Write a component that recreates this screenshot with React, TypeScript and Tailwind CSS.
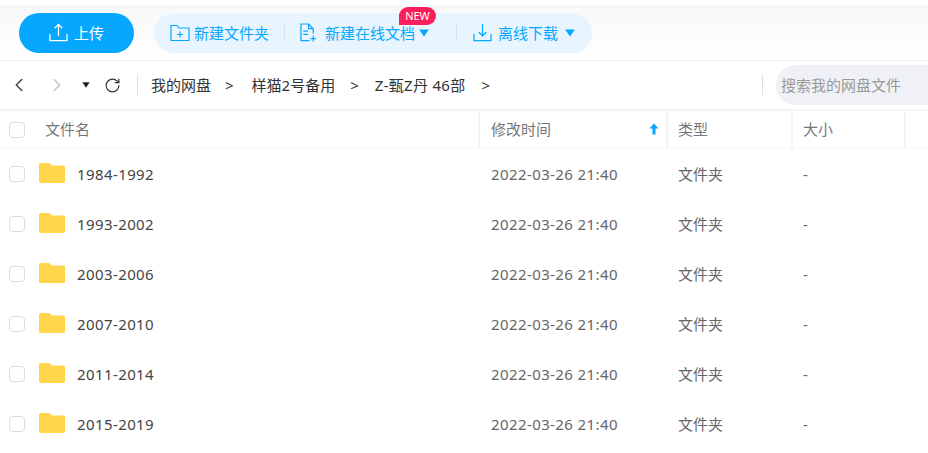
import { ChevronLeft, ChevronRight, RotateCw } from "lucide-react";

const FOLDERS = ["1984-1992", "1993-2002", "2003-2006", "2007-2010", "2011-2014", "2015-2019"];

const FONT = "font-['Noto_Sans','Noto_Sans_CJK_SC',sans-serif]";

function Caret({ className }: { className: string }) {
  return (
    <svg viewBox="0 0 12 9" className={className} fill="currentColor">
      <path d="M0.5 0.5h11L6 8.5z" />
    </svg>
  );
}

function UploadIcon() {
  return (
    <svg viewBox="0 0 20 20" className="w-[19px] h-[19px]" fill="none" stroke="white" strokeWidth="1.3">
      <path d="M1 11.500v7h18v-7M10 14V1.500M6 5.500l4-4 4 4" />
    </svg>
  );
}

function NewFolderIcon() {
  return (
    <svg viewBox="0 0 20 18" className="w-[20px] h-[18px]" fill="none" stroke="#06a7ff" strokeWidth="1.2">
      <path d="M1 16.500v-15h6l2 2.500h10v12.500zM10 7.500v6M7 10.500h6" />
    </svg>
  );
}

function NewDocIcon() {
  return (
    <svg viewBox="0 0 18 20" className="w-[17px] h-[19px]" fill="none" stroke="#06a7ff" strokeWidth="1.3">
      <path d="M10 18.500H1V1h8l5 5v5M9 1v5h5M3.500 8.500h5M3.500 12h5M14 13.500v6M11 16.500h6" />
    </svg>
  );
}

function DownloadIcon() {
  return (
    <svg viewBox="0 0 20 20" className="w-[19px] h-[19px]" fill="none" stroke="#06a7ff" strokeWidth="1.3">
      <path d="M1 11.500v7h18v-7M10 1v12.500M6 9.500l4 4 4-4" />
    </svg>
  );
}

function FolderIcon() {
  return (
    <svg viewBox="0 0 26 20" className="w-[26px] h-[20px]">
      <path d="M1.500 0h8.500l3 2.500h11.500a1.500 1.500 0 0 1 1.500 1.500v14.500a1.500 1.500 0 0 1-1.500 1.500h-23a1.500 1.500 0 0 1-1.500-1.500v-17a1.500 1.500 0 0 1 1.500-1.500z" fill="#ffd54a" />
    </svg>
  );
}

function Checkbox() {
  return <div className="w-4 h-4 rounded-[4px] border border-[#dcdcdc] bg-white shrink-0" />;
}

function HeadCell({ label, className }: { label: string; className: string }) {
  return (
    <div className={`flex items-center h-full border-r-2 border-[#f4f4f4] shrink-0 pl-[10px] pb-[2px] ${className}`}>
      {label}
    </div>
  );
}

export default function App() {
  return (
    <div className={`w-[928px] h-[453px] overflow-hidden bg-white pt-[5px] text-[15px] leading-[20px] text-[#555] ${FONT}`}>
      {/* Toolbar */}
      <div className="h-[56px] pl-[19px] flex items-center gap-5 border-b border-[#eeeeee] bg-gradient-to-b from-[#f8f8f8] to-white">
        <button className="w-[115px] h-10 rounded-full bg-[#06a7ff] text-white flex items-center justify-center gap-[6px]">
          <UploadIcon />
          上传
        </button>
        <div className="relative w-[438px] h-10 rounded-full bg-[#e8f5fe] flex items-center pl-[16px] text-[#06a7ff]">
          <div className="flex items-center gap-[4px]">
            <NewFolderIcon />
            <span>新建文件夹</span>
          </div>
          <div className="w-px h-[16px] bg-[#cfe6f7] ml-[15px] mr-[15px]" />
          <div className="flex items-center gap-[8px]">
            <NewDocIcon />
            <span>新建在线文档</span>
            <Caret className="w-[12px] h-[8px] -ml-[5px]" />
          </div>
          <div className="w-px h-[16px] bg-[#cfe6f7] ml-[26px] mr-[16px]" />
          <div className="flex items-center gap-[6px]">
            <DownloadIcon />
            <span>离线下载</span>
            <Caret className="w-[12px] h-[8px]" />
          </div>
          <span className="absolute left-[245px] -top-[6px] w-[37px] h-[18px] rounded-t-full rounded-br-full rounded-bl-[3px] bg-[#fa1e5a] text-white text-[11px] flex items-center justify-center">
            NEW
          </span>
        </div>
      </div>

      {/* Breadcrumb row */}
      <div className="h-[50px] flex items-center border-b-2 border-[#f4f4f4] text-[#333]">
        <ChevronLeft className="w-[22px] h-[22px] ml-[8px] text-[#444]" strokeWidth={1.6} />
        <ChevronRight className="w-[22px] h-[22px] ml-[16px] text-[#c4c4c4]" strokeWidth={1.6} />
        <Caret className="w-[8px] h-[6px] ml-[14px] text-[#222]" />
        <RotateCw className="w-[17px] h-[17px] ml-[14px] text-[#333]" strokeWidth={1.6} />
        <div className="w-px h-5 bg-[#dddddd] ml-[16px] mr-[13px]" />
        <div className="flex items-center">
          <span>我的网盘</span>
          <span className="ml-[14px] mr-[18px]">&gt;</span>
          <span>样猫2号备用</span>
          <span className="ml-[15px] mr-[16px]">&gt;</span>
          <span className="tracking-[0.3px]">Z-甄Z丹 46部</span>
          <span className="ml-[16px]">&gt;</span>
        </div>
        <div className="w-px h-5 bg-[#dddddd] ml-auto mr-[13px]" />
        <div className="w-[152px] h-10 rounded-l-full bg-[#f0f1f6] pl-[5px] flex items-center text-[#999]">
          搜索我的网盘文件
        </div>
      </div>

      {/* Table header */}
      <div className="h-[38px] flex items-center border-b border-[#f6f6f6] text-[#777]">
        <div className="w-[480px] h-full flex items-center pl-[9px] border-r-2 border-[#f4f4f4] shrink-0">
          <Checkbox />
          <span className="ml-[20px] mb-[2px]">文件名</span>
        </div>
        <div className="w-[188px] h-full flex items-center pl-[11px] pr-[7px] pb-[2px] justify-between border-r-2 border-[#f4f4f4] shrink-0">
          修改时间
          <svg viewBox="0 0 10 12" className="w-[10px] h-[12px]" fill="#06a7ff">
            <path d="M5 0.500L9.500 5.500H6.500V11.500H3.500V5.500H0.500z" />
          </svg>
        </div>
        <HeadCell label="类型" className="w-[125px]" />
        <HeadCell label="大小" className="w-[113px]" />
      </div>

      {/* Rows */}
      {FOLDERS.map((name) => (
        <div key={name} className="h-[50px] flex items-center">
          <div className="w-[480px] flex items-center pl-[9px] shrink-0 text-[#444]">
            <Checkbox />
            <div className="ml-[14px] mb-[3px]">
              <FolderIcon />
            </div>
            <span className="ml-[12px] tracking-[0.4px]">{name}</span>
          </div>
          <div className="w-[188px] pl-[11px] shrink-0 text-[#666] tracking-[0.4px]">2022-03-26 21:40</div>
          <div className="w-[125px] pl-[10px] shrink-0 text-[#666]">文件夹</div>
          <div className="pl-[10px] text-[#666]">-</div>
        </div>
      ))}
    </div>
  );
}
